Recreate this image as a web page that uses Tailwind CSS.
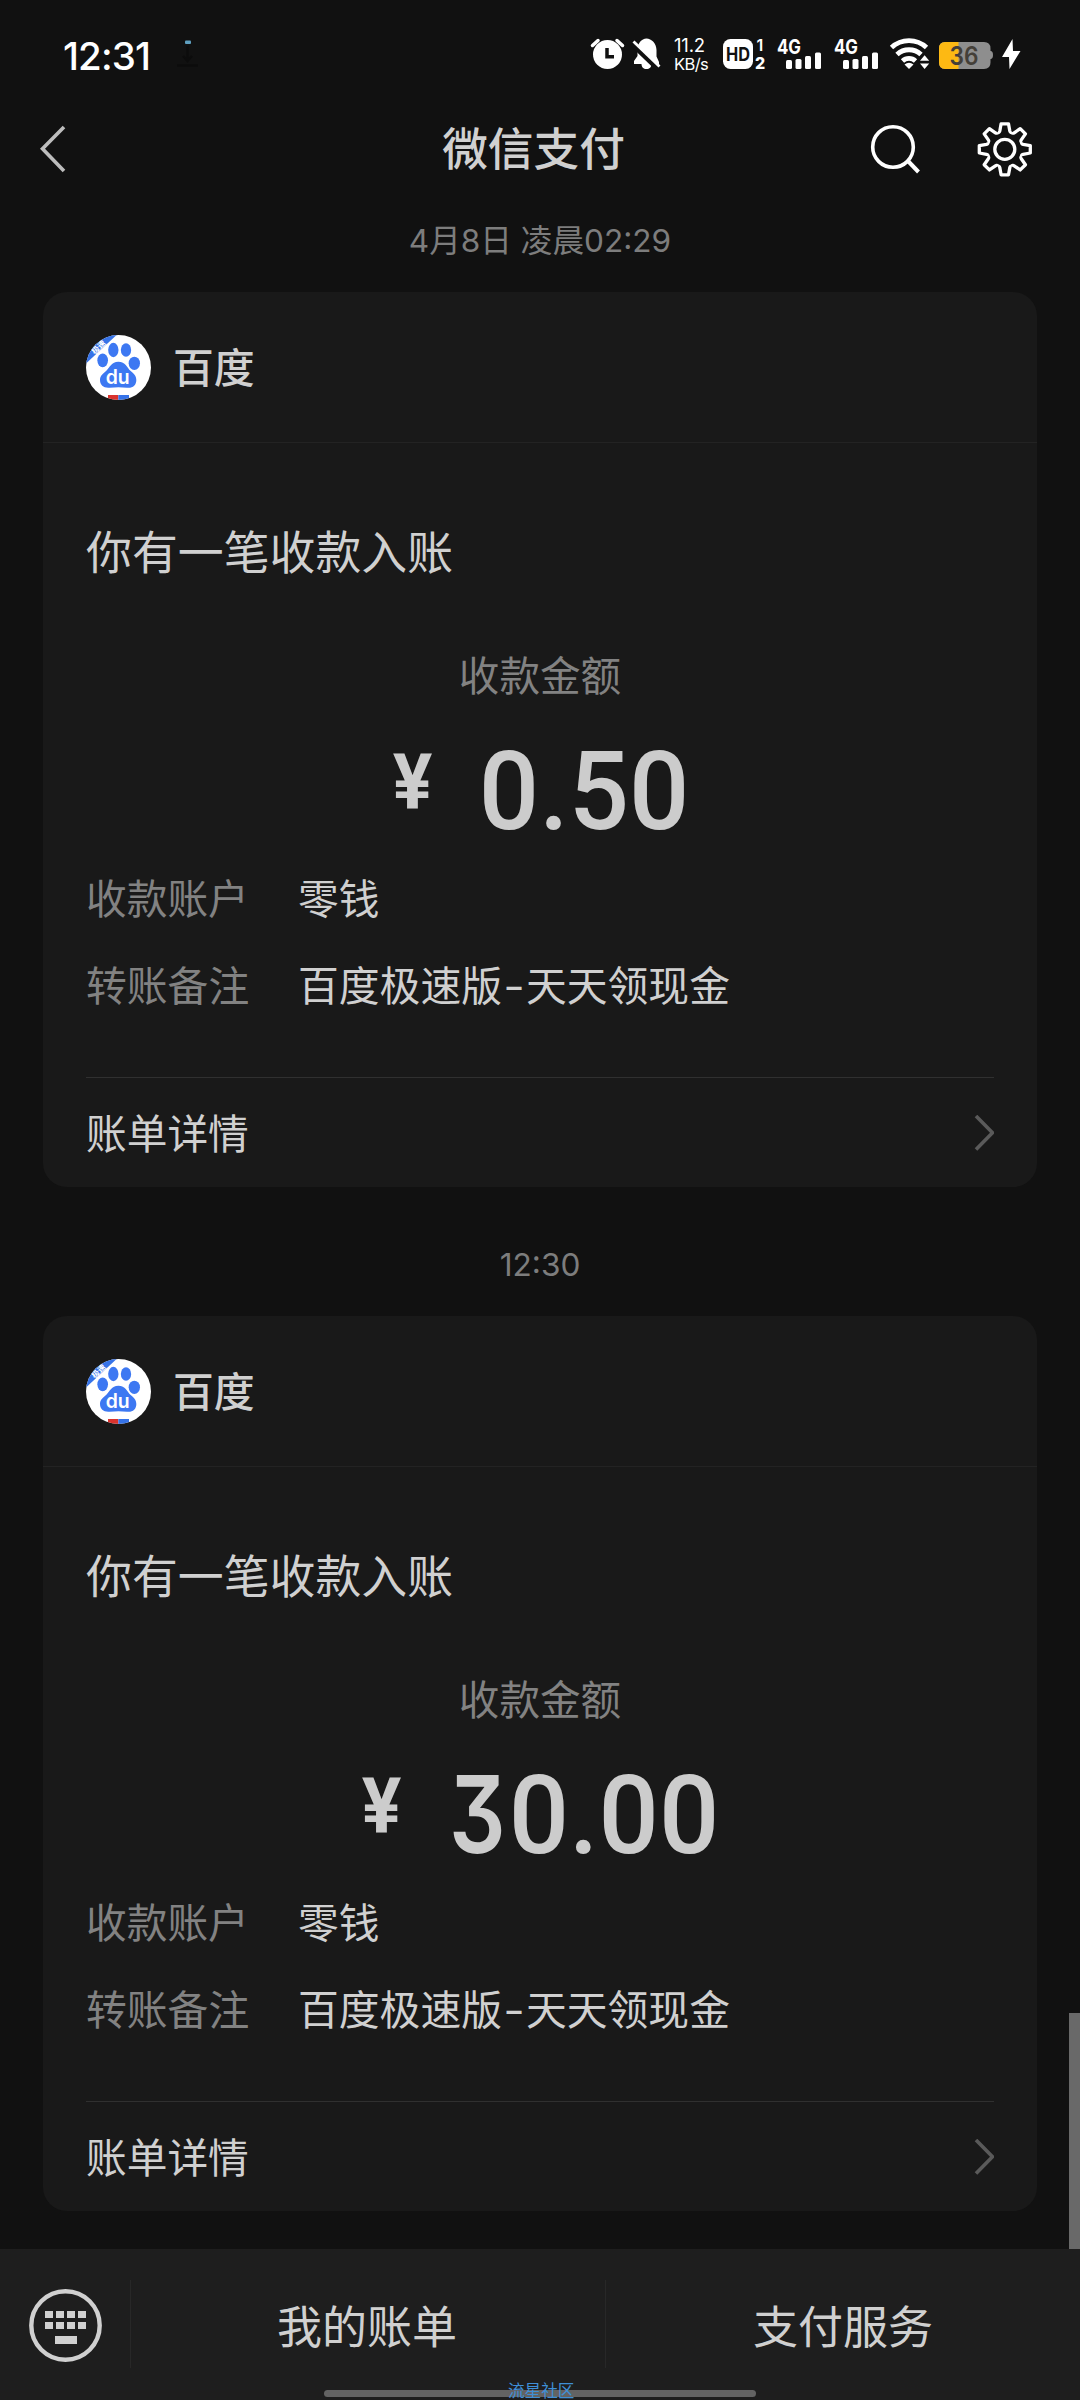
<!DOCTYPE html>
<html lang="zh-CN">
<head>
<meta charset="utf-8">
<title>微信支付</title>
<script src="https://cdn.jsdelivr.net/npm/@tailwindcss/browser@4"></script>
</head>
<body class="bg-[#111111]">
<div class="relative flex flex-col w-[1080px] h-[2400px] overflow-hidden bg-[#111111] text-[#d0d0d0] font-['Inter','Noto_Sans_CJK_SC',sans-serif]">

  <!-- status bar -->
  <header class="flex h-[110px] shrink-0 items-start pl-[63px] text-white">
    <div class="w-[109px] pt-[37px] text-[38.5px] leading-[38px] font-medium tracking-[-0.9px] whitespace-nowrap">12:31</div>
    <svg class="w-[32px] h-[110px]" viewBox="172 0 32 110"><rect x="185" y="40.500" width="6" height="3.500" rx="1" fill="#5fa0c0"/><path d="M187.500 46v14M183 56l4.500 5 4.500-5" stroke="#0c0c0c" stroke-width="2.500" fill="none"/><path d="M177 65.500h21" stroke="#0c0c0c" stroke-width="2.500"/></svg>
    <svg class="ml-[382px] w-[76px] h-[110px]" viewBox="586 0 76 110" fill="#fff">
      <circle cx="607.500" cy="54.500" r="14.500"/><path d="M592.500 45.500l5.500-5M622.500 45.500l-5.500-5" stroke="#fff" stroke-width="3.500" stroke-linecap="round"/><path d="M607 48v8.800h7" stroke="#111" stroke-width="3.500" fill="none"/>
      <path d="M634 64V61l3.500-5V50c0-6.500 4-11.500 9-11.500s10 5 10 11.500v6.500l2.500 5.500v2h-7.500c0 3-2 5-5 5s-5-2-5-5z"/><path d="M632.500 44.500l26 25" stroke="#111" stroke-width="5"/><path d="M633.500 41.500l26 25" stroke="#fff" stroke-width="2.800"/>
    </svg>
    <div class="ml-[12px] w-[37px] pt-[36px] text-[18.5px] leading-[19px]"><div class="tracking-[-0.2px]">11.2</div><div class="pt-[1px] text-[16.5px] leading-[17px] tracking-[-0.6px]">KB/s</div></div>
    <svg class="ml-[12px] w-[46px] h-[110px]" viewBox="723 0 46 110">
      <rect x="723" y="39" width="30" height="30" rx="7.500" fill="#fff"/>
      <text x="726" y="61" font-size="18.500" font-weight="700" textLength="24" lengthAdjust="spacingAndGlyphs" fill="#111">HD</text>
      <text x="756.500" y="51" font-size="16" font-weight="600" fill="#fff">1</text><text x="755" y="68.500" font-size="16" font-weight="800" fill="#fff">2</text>
    </svg>
    <svg class="ml-[7px] w-[104px] h-[110px]" viewBox="776 0 104 110" fill="#fff">
      <g id="sig"><text x="777" y="54" font-size="20" font-weight="700" textLength="24" lengthAdjust="spacingAndGlyphs">4G</text><rect x="786" y="60" width="6" height="9" rx="1.500"/><rect x="795.500" y="59" width="6" height="10" rx="1.500"/><rect x="805" y="56" width="6" height="13" rx="1.500"/><rect x="815" y="52.500" width="6" height="16.500" rx="1.500"/></g>
      <use href="#sig" x="57"/>
    </svg>
    <svg class="ml-[8px] w-[42px] h-[110px]" viewBox="888 0 42 110" fill="none" stroke="#fff" stroke-width="4.800">
      <path d="M891.500 47.500a25.500 25.500 0 0 1 35 0M897 54.500a17.500 17.500 0 0 1 24 0M902.500 61a9.500 9.500 0 0 1 13 0"/><path d="M909 69l-4.500-4.500q4.500-3.600 9 0z" fill="#fff" stroke="none"/>
      <path d="M918.500 60.800L924.500 53.500l6 7.300v3L924.500 70.500l-6-7z" fill="#111" stroke="none"/><path d="M920 60.800l4.600-5.500 4.600 5.500zM920 63.500h9.200l-4.600 5.500z" fill="#fff" stroke="none"/>
    </svg>
    <svg class="ml-[8px] w-[84px] h-[110px]" viewBox="938 0 84 110">
      <path d="M945 42H984q6.500 0 6.500 6.500V51q2.500 0 2.500 4t-2.500 4v3.500q0 6.500-6.500 6.500H945q-6 0-6-6.500V48.500q0-6.500 6-6.500z" fill="#8e8e8e"/>
      <path d="M958.500 42H945q-6 0-6 6.500v14q0 6.500 6 6.500h13.500z" fill="#fdb913"/>
      <text x="949.500" y="64.800" font-size="25" font-weight="600" textLength="29" lengthAdjust="spacingAndGlyphs" fill="#443f38">36</text>
      <path d="M1012.500 39l-10.500 18h7l0.500 12 11-18h-7.500z" fill="#fff"/>
    </svg>
  </header>

  <!-- title bar -->
  <div class="flex h-[80px] shrink-0 items-center">
    <svg class="w-[220px] h-[80px]" viewBox="0 110 220 80"><path d="M64 132.500L42.500 154.300 64 176.500" transform="translate(0 -5.500)" fill="none" stroke="#bdbdbd" stroke-width="3.600"/></svg>
    <h1 class="flex-1 pr-[13px] text-center text-[45.7px] leading-none font-medium">微信支付</h1>
    <svg class="w-[220px] h-[80px]" viewBox="860 110 220 80" fill="none" stroke="#fff">
      <circle cx="893" cy="147" r="20.300" stroke-width="3.600"/><path d="M907.500 160.500l11 11.500" stroke-width="4"/>
      <g transform="translate(1004.800 149.300)" stroke-width="3.300" stroke-linejoin="round"><circle r="10"/>
        <path id="t" d="M-7.100-16.900Q-5.400-16.500-5-18.300L-3.700-25.500H3.700L5-18.300Q5.400-16.500 7.100-16.900"/>
        <use href="#t" transform="rotate(45)"/><use href="#t" transform="rotate(90)"/><use href="#t" transform="rotate(135)"/><use href="#t" transform="rotate(180)"/><use href="#t" transform="rotate(225)"/><use href="#t" transform="rotate(270)"/><use href="#t" transform="rotate(315)"/>
      </g>
    </svg>
  </div>

  <main class="flex flex-col">
    <div class="flex h-[102px] items-center justify-center text-[31.6px] leading-none text-[#7d7d7d]">4月8日 凌晨02:29</div>

    <section class="mx-[43px] h-[895px] rounded-[24px] bg-[#191919]">
      <div class="flex h-[151px] items-center border-b border-[#232323] pl-[43px]">
        <svg class="size-[65px]" viewBox="138 135 195 195">
          <defs><clipPath id="c"><circle cx="235.500" cy="232.500" r="97.500"/></clipPath>
          <g id="logo" clip-path="url(#c)"><path d="M138 135h195v195H138z" fill="#fff"/><path d="M130 228L233 132H130z" fill="#3673e8"/><text x="0" y="0" transform="translate(164 194) rotate(-43)" font-size="24" font-weight="700" fill="#fff">极速</text>
          <g fill="#3d78f2"><ellipse cx="188" cy="211" rx="16" ry="20.500"/><ellipse cx="220" cy="180" rx="15.500" ry="21.500"/><ellipse cx="258" cy="180" rx="15.500" ry="20"/><ellipse cx="283" cy="220" rx="17" ry="20"/><path d="M235 215c22 0 25 17 37 28 10 9 17 14 17 27 0 17-12 25-28 23-18-2-33-2-52 0-17 2-29-7-29-23 0-14 10-19 19-28 11-11 15-27 36-27z"/></g>
          <text x="197" y="283" font-size="60" font-weight="600" textLength="72" lengthAdjust="spacingAndGlyphs" fill="#fff">du</text><path d="M204 315h31v16h-31z" fill="#d9332e"/><path d="M235 315h32v16h-32z" fill="#3673e8"/></g></defs>
          <use href="#logo"/>
        </svg>
        <div class="pl-[22px] pt-[3px] text-[40.8px] leading-none font-medium">百度</div>
      </div>
      <div class="h-[634px] px-[43px]">
        <div class="pt-[84px] text-[45.9px] leading-[52px]">你有一笔收款入账</div>
        <div class="pt-[75px] text-center text-[40.6px] leading-[46px] text-[#828282]">收款金额</div>
        <div class="flex h-[132px] justify-center pl-[5px] font-['Roboto'] font-medium text-[#cccccc]">
          <div class="mr-[42px] pt-[43px] text-[77px] leading-[80px] font-bold scale-x-[.96]">¥</div>
          <div class="pt-[37px] text-[110px] leading-[110px] scale-x-[.965]">0.50</div>
        </div>
        <div class="flex pt-[45px] text-[40.7px] leading-[46px]"><div class="w-[212px] text-[#828282]">收款账户</div><div>零钱</div></div>
        <div class="flex pt-[40px] text-[40.8px] leading-[46px]"><div class="w-[212px] text-[#828282]">转账备注</div><div>百度极速版<span class="inline-block w-[24px] scale-x-[1.15] text-center">-</span>天天领现金</div></div>
      </div>
      <div class="mx-[43px] flex h-[110px] items-center justify-between border-t border-[#303030]">
        <div class="pt-[5px] text-[40.7px] leading-none">账单详情</div>
        <svg class="w-[20px] h-[36px]" viewBox="974 1116 20 36"><path d="M976 1117l16.500 16.700L976 1150.500" fill="none" stroke="#5a5a5a" stroke-width="3.600"/></svg>
      </div>
    </section>

    <div class="flex h-[129px] items-center justify-center pt-[26px] text-[31.6px] leading-none text-[#7d7d7d]">12:30</div>

    <section class="mx-[43px] h-[895px] rounded-[24px] bg-[#191919]">
      <div class="flex h-[151px] items-center border-b border-[#232323] pl-[43px]">
        <svg class="size-[65px]" viewBox="138 135 195 195"><use href="#logo"/></svg>
        <div class="pl-[22px] pt-[3px] text-[40.8px] leading-none font-medium">百度</div>
      </div>
      <div class="h-[634px] px-[43px]">
        <div class="pt-[84px] text-[45.9px] leading-[52px]">你有一笔收款入账</div>
        <div class="pt-[75px] text-center text-[40.6px] leading-[46px] text-[#828282]">收款金额</div>
        <div class="flex h-[132px] justify-center pl-[5px] font-['Roboto'] font-medium text-[#cccccc]">
          <div class="mr-[42px] pt-[43px] text-[77px] leading-[80px] font-bold scale-x-[.96]">¥</div>
          <div class="pt-[37px] text-[110px] leading-[110px] scale-x-[.965] whitespace-nowrap"><span class="inline-block w-[62px] origin-left scale-x-[.86] font-['Inter'] text-[107px] leading-[90px] font-semibold [font-feature-settings:'cv09']">3</span>0.00</div>
        </div>
        <div class="flex pt-[45px] text-[40.7px] leading-[46px]"><div class="w-[212px] text-[#828282]">收款账户</div><div>零钱</div></div>
        <div class="flex pt-[40px] text-[40.8px] leading-[46px]"><div class="w-[212px] text-[#828282]">转账备注</div><div>百度极速版<span class="inline-block w-[24px] scale-x-[1.15] text-center">-</span>天天领现金</div></div>
      </div>
      <div class="mx-[43px] flex h-[110px] items-center justify-between border-t border-[#303030]">
        <div class="pt-[5px] text-[40.7px] leading-none">账单详情</div>
        <svg class="w-[20px] h-[36px]" viewBox="974 1116 20 36"><path d="M976 1117l16.500 16.700L976 1150.500" fill="none" stroke="#5a5a5a" stroke-width="3.600"/></svg>
      </div>
    </section>
  </main>

  <!-- scroll thumb -->
  <div class="absolute right-0 top-[2013px] h-[236px] w-[11px] bg-[#696969]"></div>

  <!-- bottom menu -->
  <footer class="mt-auto flex h-[151px] shrink-0 bg-[#1e1e1e] pt-[31px]">
    <div class="h-[88px] w-[131px] border-r border-[#282828]">
      <svg class="w-[130px] h-[88px]" viewBox="0 2280 130 88" fill="#d0d0d0"><circle cx="65.500" cy="2325.500" r="34.200" fill="none" stroke="#d0d0d0" stroke-width="4.400"/>
      <path d="M45 2311h8v7h-8zM56 2311h8v7h-8zM67 2311h8v7h-8zM78 2311h8v7h-8zM45 2322h8v7h-8zM56 2322h8v7h-8zM67 2322h8v7h-8zM78 2322h8v7h-8zM55 2336h22v8H55z"/></svg>
    </div>
    <div class="flex h-[88px] w-[475px] items-center justify-center border-r border-[#282828] pt-[6px] pr-[2px] text-[45px] leading-none">我的账单</div>
    <div class="flex h-[88px] flex-1 items-center justify-center pt-[6px] text-[45px] leading-none">支付服务</div>
  </footer>
  <div class="absolute left-[324px] top-[2390px] h-[7px] w-[432px] rounded-full bg-[#636363]"></div>
  <div class="absolute left-[508px] top-[2383px] text-[16.6px] leading-[17px] text-[#3f8fd6] whitespace-nowrap">流星社区</div>
</div>
</body>
</html>
